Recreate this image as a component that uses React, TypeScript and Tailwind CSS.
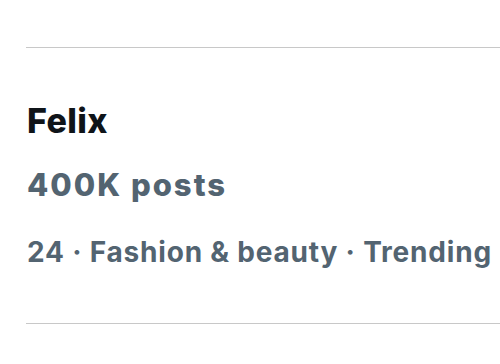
export default function App() {
  return (
    <div className="w-[500px] h-[364px] bg-white pt-[47px] pl-[26px] overflow-hidden font-['Inter',sans-serif]">
      <div className="border-y border-[#c8c8c8] h-[277px] pl-px pt-[53px]">
        <div className="text-[34px] leading-[40px] font-extrabold text-[#0f1419] tracking-[0.4px]">Felix</div>
        <div className="mt-[26px] text-[31px] leading-[36px] font-extrabold text-[#536471] tracking-[2px]">400K posts</div>
        <div className="mt-[32px] text-[28px] leading-[34px] font-bold text-[#536471] whitespace-nowrap tracking-[0.8px]">
          24 · Fashion &amp; beauty · Trending
        </div>
      </div>
    </div>
  );
}
